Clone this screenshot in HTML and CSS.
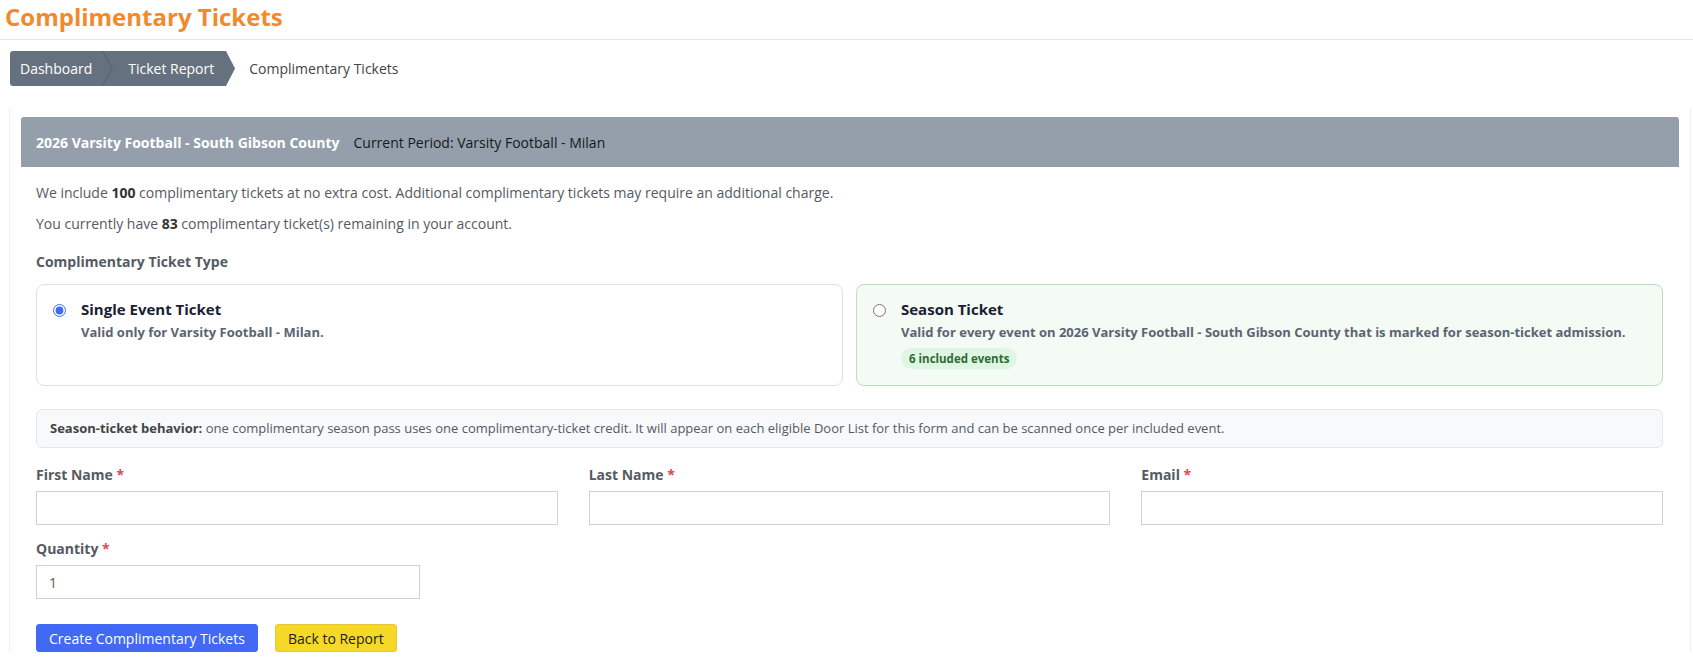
FILE: index.html
```html
<!DOCTYPE html>
<html lang="en">
<head>
    <meta charset="UTF-8">
    <meta name="viewport" content="width=device-width, initial-scale=1.0">
    <title>Complimentary Tickets</title>
    <link rel="stylesheet" href="styles.css">
</head>
<body>
    <div class="cabecera">
        <h1>Complimentary Tickets</h1>
    </div>

    <nav class="migas">
        <a class="miga" href="#">Dashboard</a>
        <svg class="separador" width="11" height="35" viewBox="0 0 11 35"><polyline points="0,0 10.5,17.5 0,35" fill="none" stroke="#56606c" stroke-width="1"/></svg>
        <a class="miga miga-ultima" href="#">Ticket Report</a>
        <svg class="punta" width="9" height="35" viewBox="0 0 9 35"><polygon points="0,0 9,17.5 0,35" fill="#66717f"/></svg>
        <span class="miga-actual">Complimentary Tickets</span>
    </nav>

    <div class="contenedor">
        <div class="panel">
            <div class="panel-titulo">
                <strong>2026 Varsity Football - South Gibson County</strong>
                <span class="periodo">Current Period: Varsity Football - Milan</span>
            </div>

            <div class="panel-cuerpo">
                <p class="texto">We include <b>100</b> complimentary tickets at no extra cost. Additional complimentary tickets may require an additional charge.</p>
                <p class="texto">You currently have <b>83</b> complimentary ticket(s) remaining in your account.</p>

                <div class="etiqueta-grupo">Complimentary Ticket Type</div>

                <div class="opciones">
                    <label class="opcion">
                        <input type="radio" name="tipo" checked>
                        <div>
                            <div class="opcion-titulo">Single Event Ticket</div>
                            <div class="opcion-texto">Valid only for Varsity Football - Milan.</div>
                        </div>
                    </label>
                    <label class="opcion opcion-temporada">
                        <input type="radio" name="tipo">
                        <div>
                            <div class="opcion-titulo">Season Ticket</div>
                            <div class="opcion-texto">Valid for every event on 2026 Varsity Football - South Gibson County that is marked for season-ticket admission.</div>
                            <span class="insignia">6 included events</span>
                        </div>
                    </label>
                </div>

                <div class="aviso">
                    <b>Season-ticket behavior:</b> one complimentary season pass uses one complimentary-ticket credit. It will appear on each eligible Door List for this form and can be scanned once per included event.
                </div>

                <div class="fila">
                    <div class="campo">
                        <label>First Name <span class="req">*</span></label>
                        <input type="text">
                    </div>
                    <div class="campo">
                        <label>Last Name <span class="req">*</span></label>
                        <input type="text">
                    </div>
                    <div class="campo">
                        <label>Email <span class="req">*</span></label>
                        <input type="email">
                    </div>
                </div>

                <div class="campo campo-cantidad">
                    <label>Quantity <span class="req">*</span></label>
                    <input type="text" value="1">
                </div>

                <div class="botones">
                    <button class="boton-azul">Create Complimentary Tickets</button>
                    <button class="boton-amarillo">Back to Report</button>
                </div>
            </div>
        </div>
    </div>
</body>
</html>
```

FILE: styles.css
```css
body {
    font-family: "Open Sans", sans-serif;
    margin: 0;
    color: #555a62;
    background-color: #fff;
}
.cabecera {
    height: 39px;
    border-bottom: 1px solid #e6e8eb;
    padding: 0 5px;
}
h1 {
    margin: 0;
    font-size: 24px;
    line-height: 33px;
    font-weight: 700;
    color: #f18a2c;
}
.migas {
    display: flex;
    align-items: center;
    margin: 11px 0 0 10px;
    height: 35px;
}
.miga {
    display: flex;
    align-items: center;
    height: 35px;
    background-color: #66717f;
    color: #fff;
    text-decoration: none;
    font-size: 14px;
    padding: 0 10px;
}
.miga:first-child {
    border-radius: 3px 0 0 3px;
}
.separador {
    background-color: #66717f;
    display: block;
}
.miga-ultima {
    padding: 0 12px 0 15px;
}
.punta {
    display: block;
}
.miga-actual {
    margin-left: 14px;
    font-size: 14px;
    color: #444;
}
.contenedor {
    margin: 22px 2px 0 9px;
    border-left: 1px solid #eef0f2;
    border-right: 1px solid #eef0f2;
    padding: 9px 11px 0 11px;
}
.panel-titulo {
    background-color: #949fab;
    height: 50px;
    display: flex;
    align-items: center;
    padding: 0 15px;
    font-size: 14px;
    border-radius: 3px 3px 0 0;
}
.panel-titulo strong {
    color: #fff;
}
.periodo {
    color: #16191d;
    margin-left: 14px;
}
.panel-cuerpo {
    padding: 15px 16px 0 15px;
}
.texto {
    font-size: 14px;
    line-height: 21px;
    margin: 0 0 10px 0;
}
.texto b {
    color: #333;
}
.etiqueta-grupo {
    font-size: 14px;
    font-weight: 700;
    margin-top: 18px;
    line-height: 20px;
}
.opciones {
    display: grid;
    grid-template-columns: 1fr 1fr;
    gap: 13px;
    margin-top: 12px;
}
.opcion {
    display: flex;
    align-items: flex-start;
    border: 1px solid #dde1e7;
    border-radius: 8px;
    height: 102px;
    box-sizing: border-box;
    padding: 14px 15px;
    background-color: #fff;
}
.opcion-temporada {
    border-color: #bfdcbf;
    background-color: #f4faf4;
}
.opcion input {
    margin: 5px 15px 0 1px;
    width: 13px;
    height: 13px;
    accent-color: #3b6cf0;
}
.opcion-titulo {
    font-size: 15px;
    font-weight: 700;
    color: #1a2033;
    line-height: 20px;
}
.opcion-texto {
    font-size: 13px;
    font-weight: 700;
    color: #5b6472;
    margin-top: 4px;
    line-height: 18px;
}
.insignia {
    display: inline-block;
    margin-top: 7px;
    background-color: #dff6e2;
    color: #2e6b35;
    font-size: 11.5px;
    font-weight: 700;
    border-radius: 11px;
    padding: 0 8px;
    line-height: 21px;
}
.aviso {
    margin-top: 23px;
    background-color: #f7f9fb;
    border: 1px solid #e3e8ee;
    border-radius: 6px;
    padding: 0 13px;
    height: 39px;
    box-sizing: border-box;
    line-height: 37px;
    font-size: 13px;
    white-space: nowrap;
}
.aviso b {
    color: #444;
}
.fila {
    display: grid;
    grid-template-columns: 1fr 1fr 1fr;
    gap: 31px;
    margin-top: 17px;
}
.campo label {
    display: block;
    font-size: 14px;
    font-weight: 700;
    line-height: 20px;
    margin-bottom: 6px;
}
.req {
    color: #e0455a;
}
.campo input {
    display: block;
    width: 100%;
    box-sizing: border-box;
    height: 34px;
    border: 1px solid #cfd2dc;
    border-radius: 0;
    padding: 0 12px;
    font-family: "Open Sans", sans-serif;
    font-size: 14px;
    color: #5c5c45;
}
.campo-cantidad {
    width: 384px;
    margin-top: 14px;
}
.botones {
    display: flex;
    gap: 17px;
    margin-top: 25px;
}
button {
    font-family: "Open Sans", sans-serif;
    font-size: 14px;
    height: 28px;
    border-radius: 3px;
    cursor: pointer;
    padding: 0 12px;
}
.boton-azul {
    background-color: #4169f5;
    border: 1px solid #4169f5;
    color: #fff;
}
.boton-amarillo {
    background-color: #f6d826;
    border: 1px solid #e3c93a;
    color: #1f1f1f;
}
```
